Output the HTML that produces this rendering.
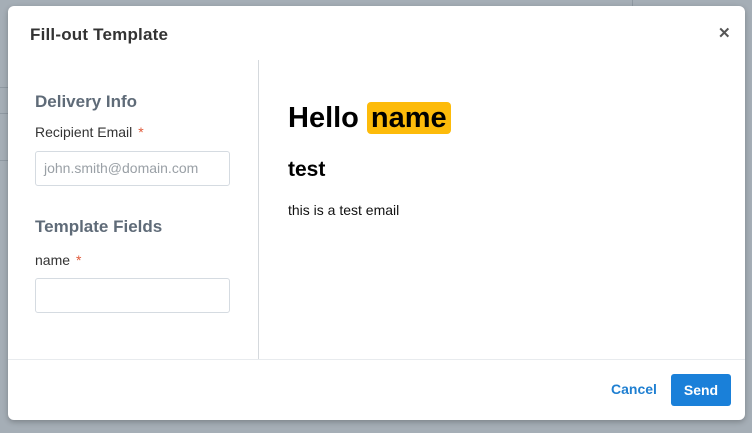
<!DOCTYPE html>
<html><head><style>
body{margin:0;width:752px;height:433px;background:#a5aeb6;position:relative;overflow:hidden;font-family:"Liberation Sans",sans-serif}
.bgl{position:absolute;background:#8f99a2;height:1px}
.m{position:absolute;left:8px;top:6px;width:737px;height:414px;background:#fff;border-radius:6px;box-shadow:0 2px 6px rgba(0,0,0,.25)}
.t{position:absolute;left:22px;top:19px;font-size:17px;font-weight:bold;color:#333;letter-spacing:.2px}
.x{position:absolute;left:710px;top:18px;font-size:15px;color:#555;font-weight:bold}
.vl{position:absolute;left:250px;top:54px;width:1px;height:299px;background:#d5d9dd}
.hl{position:absolute;left:0;top:353px;width:737px;height:1px;background:#e8ebee}
.h{position:absolute;left:27px;font-size:17px;font-weight:bold;color:#5f6b78}
.lb{position:absolute;left:27px;font-size:14px;color:#333}
.lb span{color:#e05a3a;margin-left:6px}
.in{position:absolute;left:27px;width:195px;height:35px;border:1px solid #d5dbe1;border-radius:3px;font-size:14px;color:#9aa0a6;line-height:33px;padding-left:8px;box-sizing:border-box}
.hello{position:absolute;left:280px;top:96px;font-size:29px;font-weight:bold;color:#000;white-space:nowrap}
.hello b{background:#fdbb0a;border-radius:4px;padding:0 4px;margin-left:8px}
.test{position:absolute;left:280px;top:152px;font-size:21px;font-weight:bold;color:#000}
.p{position:absolute;left:280px;top:196px;font-size:14px;color:#111}
.c{position:absolute;left:603px;top:375px;font-size:14px;font-weight:bold;color:#1f7fd1}
.s{position:absolute;left:663px;top:368px;width:60px;height:32px;background:#1a80d9;border-radius:3px;color:#fff;font-size:14px;font-weight:bold;text-align:center;line-height:32px}
</style></head><body>
<div class="bgl" style="left:0;top:87px;width:8px"></div>
<div class="bgl" style="left:0;top:113px;width:8px"></div>
<div class="bgl" style="left:0;top:160px;width:8px"></div>
<div style="position:absolute;left:632px;top:0;width:1px;height:6px;background:#8f99a2"></div>
<div class="m">
<div class="t">Fill-out Template</div>
<div class="x">✕</div>
<div class="vl"></div><div class="hl"></div>
<div class="h" style="top:86px">Delivery Info</div>
<div class="lb" style="top:118px">Recipient Email<span>*</span></div>
<div class="in" style="top:145px">john.smith@domain.com</div>
<div class="h" style="top:211px">Template Fields</div>
<div class="lb" style="top:246px">name<span>*</span></div>
<div class="in" style="top:272px"></div>
<div class="hello">Hello<b>name</b></div>
<div class="test">test</div>
<div class="p">this is a test email</div>
<div class="c">Cancel</div>
<div class="s">Send</div>
</div>
</body></html>
